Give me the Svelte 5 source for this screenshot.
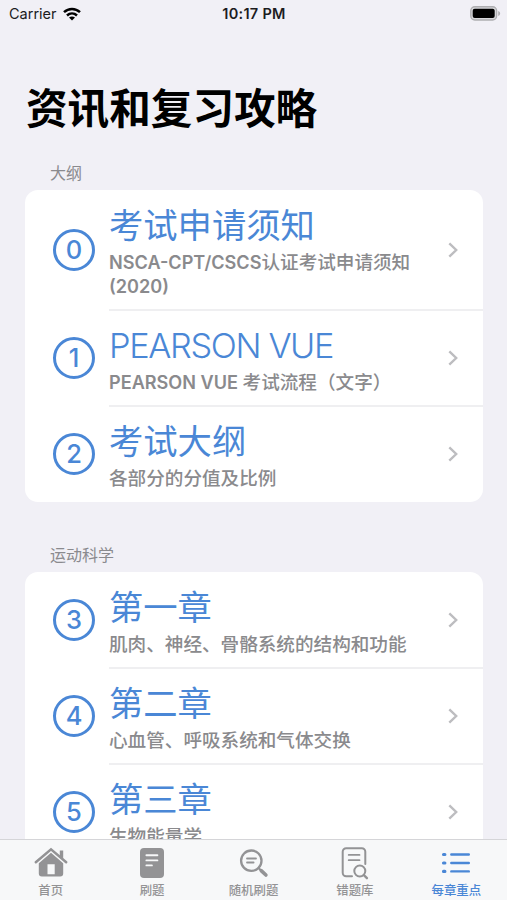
<script>
    const sections = [
        {
            name: '大纲',
            items: [
                { id: 0, title: '考试申请须知', detail: 'NSCA-CPT/CSCS认证考试申请须知(2020)' },
                { id: 1, title: 'PEARSON VUE', detail: 'PEARSON VUE 考试流程（文字）', latin: true },
                { id: 2, title: '考试大纲', detail: '各部分的分值及比例' }
            ]
        },
        {
            name: '运动科学',
            items: [
                { id: 3, title: '第一章', detail: '肌肉、神经、骨骼系统的结构和功能' },
                { id: 4, title: '第二章', detail: '心血管、呼吸系统和气体交换' },
                { id: 5, title: '第三章', detail: '生物能量学' }
            ]
        }
    ];

    const tabs = [
        { id: 'home', label: '首页' },
        { id: 'quiz', label: '刷题' },
        { id: 'random', label: '随机刷题' },
        { id: 'wrong', label: '错题库' },
        { id: 'chapters', label: '每章重点' }
    ];

    let active = $state('chapters');

    // latin runs are set heavier than the chinese text around them
    function splitRuns(text) {
        return text.split(/([ -~]+)/).filter(Boolean);
    }

    function isLatin(run) {
        return /^[ -~]/.test(run);
    }
</script>

<div class="screen">
    <header class="status-bar">
        <div class="carrier">
            <span>Carrier</span>
            <svg width="18" height="14" viewBox="0 0 18 14" fill="none" stroke="#000" stroke-width="2.5">
                <path d="M1 5.2C5.6.9 12.4.9 17 5.2" />
                <path d="M4 8.5c2.9-2.7 7.1-2.7 10 0" />
                <path d="M9 13.6l-3-3.1c1.8-1.5 4.2-1.5 6 0z" fill="#000" stroke="none" />
            </svg>
        </div>
        <span class="time">10:17 PM</span>
        <svg class="battery" width="31" height="15" viewBox="0 0 31 15">
            <rect x=".8" y=".8" width="25.8" height="13.2" rx="4" fill="#d9d9dc" stroke="#aeaeb1" stroke-width="1.4" />
            <rect x="2.7" y="2.7" width="22" height="9.4" rx="2" fill="#000" />
            <path d="M28.2 5v5c2.6-.8 2.6-4.2 0-5z" fill="#aeaeb1" />
        </svg>
    </header>

    <main class="content">
        <h1>资讯和复习攻略</h1>

        {#each sections as section}
            <section>
                <h2>{section.name}</h2>
                <div class="card">
                    {#each section.items as item (item.id)}
                        <div class="row">
                            <div class="badge">{item.id}</div>
                            <div class="body">
                                <div class="text">
                                    <div class="title" class:latin={item.latin}>{item.title}</div>
                                    <div class="detail">
                                        {#each splitRuns(item.detail) as run}<span class:run={isLatin(run)}>{run}</span>{/each}
                                    </div>
                                </div>
                                <svg class="chevron" width="10" height="16" viewBox="0 0 10 16">
                                    <path d="M1.3 1.3L8.2 8l-6.9 6.7" fill="none" stroke="#bdbdc0" stroke-width="2.4" />
                                </svg>
                            </div>
                        </div>
                    {/each}
                </div>
            </section>
        {/each}
    </main>

    <nav class="tab-bar">
        {#each tabs as tab (tab.id)}
            <button class="tab" class:active={active === tab.id} onclick={() => (active = tab.id)}>
                <svg width="36" height="34" viewBox="0 0 36 34" fill="none" stroke="currentColor" stroke-linecap="round">
                    {#if tab.id === 'home'}
                        <path d="M2.8 16.2L18 3.3l15.2 12.9" stroke-width="2.5" />
                        <path d="M26.8 4.5h3.4v8.3l-3.4-2.9z" fill="currentColor" stroke="none" />
                        <path
                            d="M18 6.8L5.8 17.2v10.3a3 3 0 003 3h18.4a3 3 0 003-3V17.2zM14.5 18.2h7.2v10h-7.2z"
                            fill="currentColor"
                            fill-rule="evenodd"
                            stroke="none"
                        />
                    {:else if tab.id === 'quiz'}
                        <rect x="6" y="2" width="24" height="30" rx="4" fill="currentColor" stroke="none" />
                        <path d="M12.4 9.2h11M12.4 14.4h11M12.4 19.4h5.5" stroke="#f7f8f9" stroke-width="1.9" />
                    {:else if tab.id === 'random'}
                        <circle cx="15.3" cy="14.7" r="10.2" stroke-width="2.3" />
                        <path d="M22.8 22.2l2.3 2.3" stroke-width="2" />
                        <path d="M25.2 24.6l4.7 4.4" stroke-width="3.6" />
                        <path d="M11 12.5h9M11 16.5h6.6" stroke-width="1.8" />
                    {:else if tab.id === 'wrong'}
                        <path d="M15 30.3H9.2a3.5 3.5 0 01-3.5-3.5V5.7a3.5 3.5 0 013.5-3.5h15.6a3.5 3.5 0 013.5 3.5V18" stroke-width="2" />
                        <path d="M11.7 8.9h10.8M11.7 14.2h10.8" stroke-width="1.8" />
                        <circle cx="22.8" cy="25" r="5.5" stroke-width="2" />
                        <path d="M26.9 29.2l3 3" stroke-width="2.4" />
                    {:else}
                        <path d="M5.5 8.5h1.4M5.5 17h1.4M5.5 25.4h1.4" stroke-width="3.1" />
                        <path d="M13.3 8.5h17.5M13.3 17h17.5M13.3 25.4h17.5" stroke-width="2.4" />
                    {/if}
                </svg>
                <span>{tab.label}</span>
            </button>
        {/each}
    </nav>
</div>

<style>
    :global(body) {
        margin: 0;
        overflow: hidden;
    }

    .screen {
        display: flex;
        flex-direction: column;
        width: 507px;
        height: 900px;
        overflow: hidden;
        background: #f1f0f6;
        font-family: Inter, "Noto Sans CJK SC", sans-serif;
    }

    .status-bar {
        display: grid;
        grid-template-columns: 1fr auto 1fr;
        align-items: center;
        flex: none;
        height: 27px;
        padding: 0 6px 0 9px;
        box-sizing: border-box;
        font-size: 14.5px;
        color: #1c1c1e;
    }

    .carrier {
        display: flex;
        align-items: center;
        gap: 6px;
    }

    .time {
        margin-right: 2px;
        font-weight: 600;
        letter-spacing: 0.3px;
    }

    .battery {
        justify-self: end;
    }

    .content {
        flex: 1;
        min-height: 0;
        overflow: hidden;
        padding: 52px 24px 0 25px;
    }

    h1 {
        margin: 0 0 0 1px;
        height: 61px;
        line-height: 60px;
        font-size: 41.6px;
        font-weight: 600;
        color: #000;
    }

    h2 {
        margin: 0;
        padding: 21px 25px 5px;
        line-height: 24px;
        font-size: 16px;
        font-weight: 400;
        color: #8a8a8e;
    }

    section + section h2 {
        padding-top: 41px;
    }

    .card {
        overflow: hidden;
        border-radius: 13px;
        background: #fff;
    }

    .row {
        display: flex;
        align-items: center;
        padding-left: 28px;
    }

    .badge {
        flex: none;
        width: 42px;
        height: 42px;
        box-sizing: border-box;
        border: 3px solid #4a87d6;
        border-radius: 50%;
        line-height: 36px;
        text-align: center;
        font-size: 25.5px;
        font-weight: 500;
        color: #4a87d6;
    }

    .body {
        display: flex;
        flex: 1;
        align-items: center;
        min-height: 96px;
        margin-left: 14px;
        padding: 14px 25px 11px 0;
        box-sizing: border-box;
        border-bottom: 1px solid #efeff1;
        box-shadow: 0 1px 0 #efeff1;
    }

    .row:last-child .body {
        border-bottom-color: transparent;
        box-shadow: none;
    }

    .text {
        flex: 1;
        padding-right: 20px;
    }

    .title {
        height: 42px;
        line-height: 43px;
        margin-bottom: 4px;
        font-size: 34.3px;
        font-weight: 400;
        color: #4a87d6;
        white-space: nowrap;
    }

    .title.latin {
        font-weight: 350;
        letter-spacing: -1.35px;
    }

    .detail {
        line-height: 24px;
        font-size: 18.6px;
        font-weight: 500;
        color: #8a8a8d;
    }

    .run {
        line-height: 1;
        font-size: 18.1px;
        font-weight: 600;
    }

    .chevron {
        flex: none;
        margin-bottom: 2px;
    }

    .tab-bar {
        display: flex;
        flex: none;
        height: 61px;
        box-sizing: border-box;
        border-top: 1px solid #d5d5d8;
        background: #f7f8f9;
    }

    .tab {
        display: flex;
        flex: 1;
        flex-direction: column;
        align-items: center;
        padding: 6px 0 0;
        border: none;
        background: none;
        font-family: inherit;
        color: #939395;
        cursor: pointer;
    }

    .tab span {
        margin-top: 2px;
        line-height: 18px;
        font-size: 12.4px;
        font-weight: 500;
        white-space: nowrap;
    }

    .tab.active {
        color: #4a87d6;
    }
</style>
